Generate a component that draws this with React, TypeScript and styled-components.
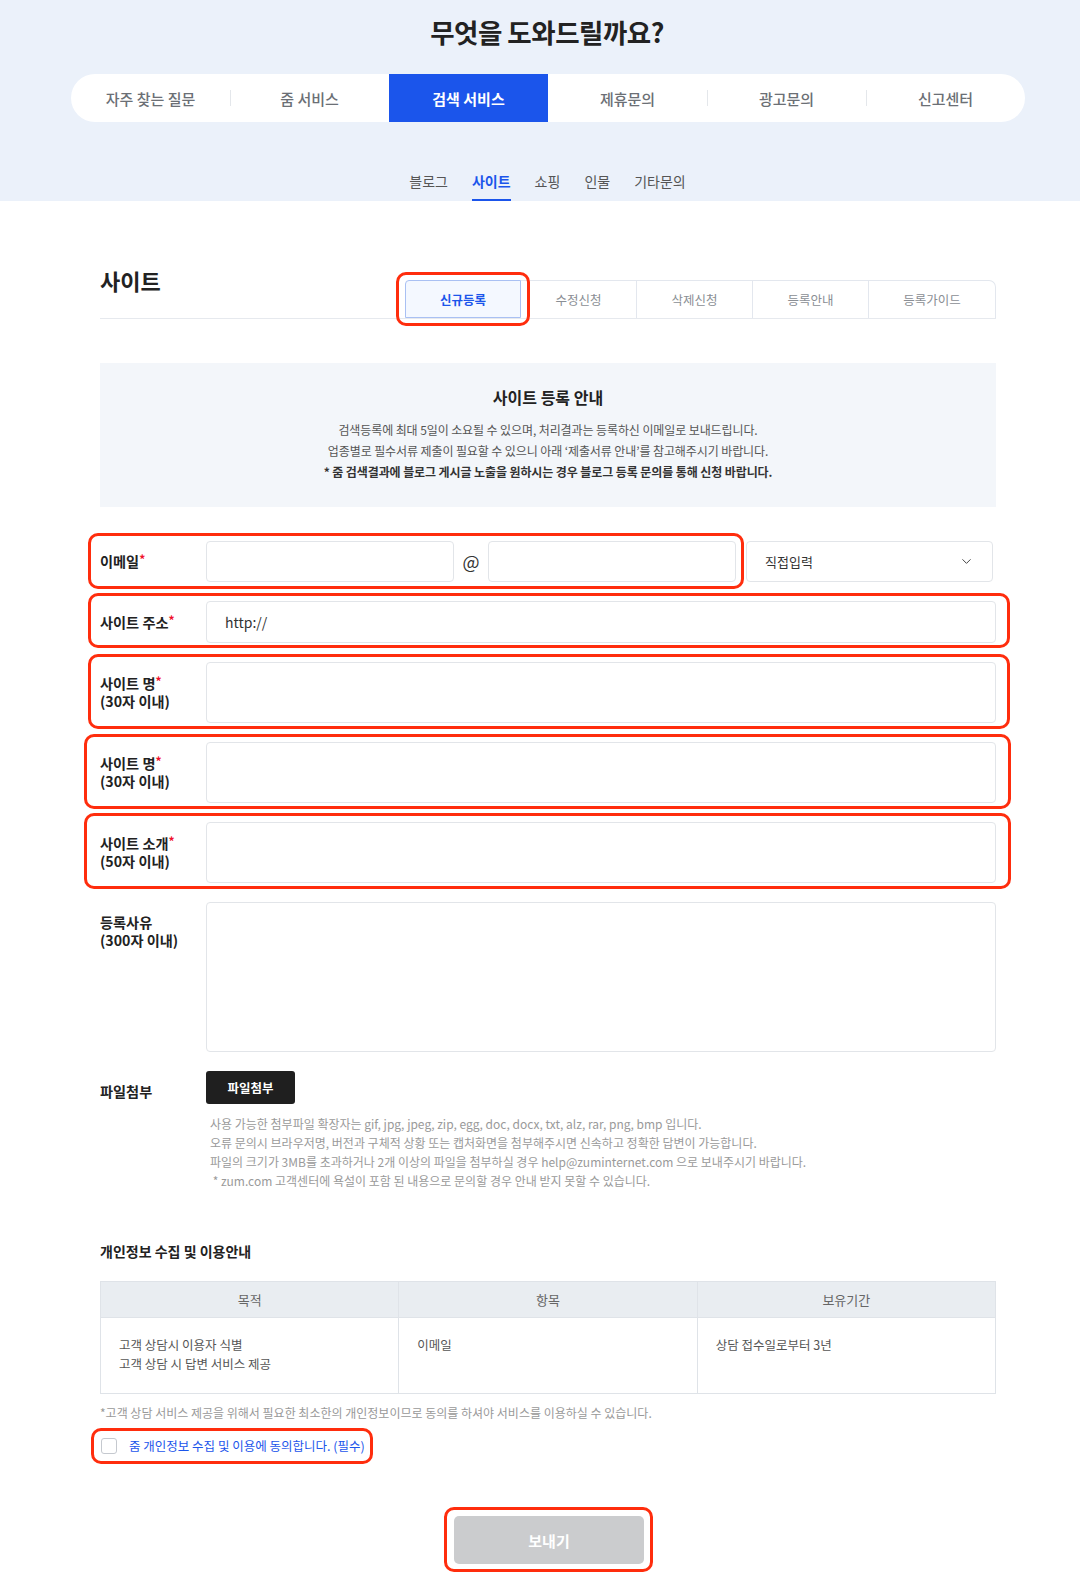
import styled, { createGlobalStyle, css } from "styled-components";
import { ChevronDown } from "lucide-react";

const GlobalStyle = createGlobalStyle`
  * { box-sizing: border-box; }
  body {
    margin: 0;
    background: #fff;
    color: #222;
    font-family: "Noto Sans CJK KR", "Noto Sans", sans-serif;
  }
`;

type MarkProps = { $mark?: string };

// red hand-drawn highlight from the screenshot
const markStyle = ({ $mark }: MarkProps) =>
  $mark &&
  css`
    position: relative;
    &::after {
      content: "";
      position: absolute;
      inset: ${$mark};
      border: 3px solid #ff2d0d;
      border-radius: 10px;
      pointer-events: none;
    }
  `;

const Hero = styled.header`
  background: #ebf1fa;
  padding-top: 15px;
`;

const Title = styled.h1`
  margin: 0;
  padding-left: 14px;
  text-align: center;
  font-size: 26.5px;
  line-height: 33px;
  font-weight: 700;
  color: #222;
  letter-spacing: -0.5px;
`;

const MainNav = styled.nav`
  display: flex;
  width: 954px;
  height: 48px;
  margin: 26px 0 0 71px;
  background: #fff;
  border-radius: 24px;
  overflow: hidden;
`;

const NavItem = styled.a<{ $active?: boolean; $sep?: boolean }>`
  position: relative;
  flex: 1;
  display: flex;
  align-items: center;
  justify-content: center;
  font-size: 15px;
  font-weight: 500;
  color: #6b6f75;
  ${(p) =>
    p.$active &&
    css`
      background: #1b55eb;
      color: #fff;
      font-weight: 700;
    `}
  ${(p) =>
    p.$sep &&
    css`
      &::before {
        content: "";
        position: absolute;
        left: 0;
        top: 16px;
        width: 1px;
        height: 16px;
        background: #e4e7eb;
      }
    `}
`;

const SubNav = styled.div`
  display: flex;
  justify-content: center;
  gap: 24px;
  margin-top: 49px;
  padding-left: 15px;
`;

const SubItem = styled.a<{ $active?: boolean }>`
  font-size: 14px;
  line-height: 20px;
  padding-bottom: 8px;
  border-bottom: 2px solid ${(p) => (p.$active ? "#1b55eb" : "transparent")};
  color: ${(p) => (p.$active ? "#1b55eb" : "#555")};
  font-weight: ${(p) => (p.$active ? 700 : 400)};
`;

const Content = styled.main`
  width: 896px;
  margin-left: 100px;
  padding: 66px 0 41px;
`;

const SectionHead = styled.div`
  display: flex;
  justify-content: space-between;
  align-items: flex-end;
  border-bottom: 1px solid #e6e9ee;
`;

const SectionTitle = styled.h2`
  align-self: flex-start;
  margin: 0;
  font-size: 22px;
  line-height: 27px;
  font-weight: 700;
  color: #222;
`;

const Tabs = styled.div`
  display: flex;
  margin-top: 13px;
`;

const Tab = styled.a<{ $active?: boolean; $last?: boolean } & MarkProps>`
  width: 116px;
  height: 38px;
  display: flex;
  align-items: center;
  justify-content: center;
  font-size: 12.5px;
  color: #8a8e94;
  border: 1px solid #e3e7ee;
  border-bottom: none;
  border-left: none;
  ${(p) =>
    p.$last &&
    css`
      border-top-right-radius: 7px;
      width: 127px;
    `}
  ${(p) =>
    p.$active &&
    css`
      background: #f4f8ff;
      border: 1px solid #a9c0f3;
      color: #1b55eb;
      font-weight: 600;
      border-top-left-radius: 4px;
    `}
  ${markStyle}
`;

const InfoBox = styled.section`
  margin-top: 44px;
  padding: 22px 0 24px;
  background: #f3f6fa;
  text-align: center;
`;

const InfoTitle = styled.h3`
  margin: 0 0 10px;
  font-size: 16px;
  line-height: 24px;
  font-weight: 700;
  color: #222;
`;

const InfoLine = styled.p<{ $strong?: boolean }>`
  margin: 0;
  font-size: 12px;
  line-height: 21.2px;
  letter-spacing: -0.1px;
  color: ${(p) => (p.$strong ? "#333" : "#555")};
  font-weight: ${(p) => (p.$strong ? 700 : 400)};
`;

const Form = styled.form`
  display: flex;
  flex-direction: column;
  gap: 19px;
  margin-top: 34px;
`;

const Row = styled.div<{ $top?: boolean } & MarkProps>`
  display: flex;
  align-items: ${(p) => (p.$top ? "flex-start" : "center")};
  ${markStyle}
`;

const EmailGroup = styled.div<MarkProps>`
  display: flex;
  align-items: center;
  ${markStyle}
`;

const Label = styled.label<{ $top?: boolean }>`
  flex: 0 0 106px;
  font-size: 14.2px;
  line-height: 18px;
  font-weight: 700;
  color: #222;
  padding-top: ${(p) => (p.$top ? "11px" : "0")};
`;

const Req = styled.span`
  color: #f0102a;
  font-size: 12px;
  vertical-align: top;
  line-height: 14px;
`;

const Field = styled.input<{ $h: number; $w?: number }>`
  flex: ${(p) => (p.$w ? `0 0 ${p.$w}px` : "1")};
  width: ${(p) => (p.$w ? `${p.$w}px` : "auto")};
  height: ${(p) => p.$h}px;
  padding: 0 18px;
  border: 1px solid #e2e5e9;
  border-radius: 4px;
  font-family: inherit;
  font-size: 14px;
  color: #333;
  background: #fff;
  outline: none;
`;

const Area = styled.textarea`
  flex: 1;
  height: 150px;
  border: 1px solid #e2e5e9;
  border-radius: 4px;
  resize: none;
  outline: none;
  font-family: inherit;
`;

const At = styled.span`
  width: 34px;
  text-align: center;
  font-size: 18px;
  color: #333;
`;

const Select = styled.div`
  display: flex;
  align-items: center;
  justify-content: space-between;
  width: 247px;
  height: 41px;
  margin-left: 10px;
  padding: 0 18px;
  border: 1px solid #e2e5e9;
  border-radius: 4px;
  font-size: 13px;
  color: #333;
`;

const FileCol = styled.div`
  display: flex;
  flex-direction: column;
  align-items: flex-start;
`;

const DarkButton = styled.button`
  width: 89px;
  height: 33px;
  border: none;
  border-radius: 3px;
  background: #1f1f1f;
  color: #fff;
  font-family: inherit;
  font-size: 12.5px;
  font-weight: 700;
`;

const Help = styled.p`
  margin: 10px 0 0;
  padding-left: 4px;
  font-size: 12px;
  line-height: 19.2px;
  color: #9a9a9a;
`;

const PrivacyTitle = styled.h4`
  margin: 51px 0 0;
  font-size: 14px;
  line-height: 20px;
  font-weight: 700;
  color: #222;
`;

const Table = styled.table`
  width: 100%;
  margin-top: 20px;
  border-collapse: collapse;
  table-layout: fixed;
  th {
    height: 36px;
    background: #e9edf1;
    border: 1px solid #dfe3e8;
    font-size: 13px;
    font-weight: 400;
    color: #666;
  }
  td {
    height: 76px;
    padding: 17px 18px;
    vertical-align: top;
    border: 1px solid #dfe3e8;
    font-size: 12.5px;
    line-height: 19px;
    color: #555;
  }
`;

const Note = styled.p`
  margin: 11px 0 0;
  font-size: 12px;
  line-height: 16px;
  color: #999;
`;

const CheckRow = styled.label<MarkProps>`
  display: inline-flex;
  align-items: center;
  gap: 12px;
  margin-top: 16px;
  margin-left: 1px;
  font-size: 12.5px;
  line-height: 18px;
  color: #1b55eb;
  ${markStyle}
`;

const Box = styled.span`
  width: 16px;
  height: 16px;
  border: 1px solid #c5c9cf;
  border-radius: 3px;
  background: #fff;
`;

const Actions = styled.div`
  display: flex;
  justify-content: center;
  margin-top: 57px;
  padding-left: 2px;
`;

const Submit = styled.button<MarkProps>`
  width: 190px;
  height: 48px;
  border: none;
  border-radius: 5px;
  background: #cbccce;
  color: #fff;
  font-family: inherit;
  font-size: 15px;
  font-weight: 700;
  ${markStyle}
`;

const mainMenu = ["자주 찾는 질문", "줌 서비스", "검색 서비스", "제휴문의", "광고문의", "신고센터"];
const subMenu = ["블로그", "사이트", "쇼핑", "인물", "기타문의"];
const tabs = ["신규등록", "수정신청", "삭제신청", "등록안내", "등록가이드"];

const App = () => {
  return (
    <>
      <GlobalStyle />
      <Hero>
        <Title>무엇을 도와드릴까요?</Title>
        <MainNav>
          {mainMenu.map((m, i) => (
            <NavItem key={m} $active={i === 2} $sep={i === 1 || i === 4 || i === 5}>
              {m}
            </NavItem>
          ))}
        </MainNav>
        <SubNav>
          {subMenu.map((s) => (
            <SubItem key={s} $active={s === "사이트"}>
              {s}
            </SubItem>
          ))}
        </SubNav>
      </Hero>

      <Content>
        <SectionHead>
          <SectionTitle>사이트</SectionTitle>
          <Tabs>
            {tabs.map((t, i) => (
              <Tab
                key={t}
                $active={i === 0}
                $last={i === tabs.length - 1}
                $mark={i === 0 ? "-9px -10px -9px -10px" : undefined}
              >
                {t}
              </Tab>
            ))}
          </Tabs>
        </SectionHead>

        <InfoBox>
          <InfoTitle>사이트 등록 안내</InfoTitle>
          <InfoLine>검색등록에 최대 5일이 소요될 수 있으며, 처리결과는 등록하신 이메일로 보내드립니다.</InfoLine>
          <InfoLine>업종별로 필수서류 제출이 필요할 수 있으니 아래 ‘제출서류 안내’를 참고해주시기 바랍니다.</InfoLine>
          <InfoLine $strong>* 줌 검색결과에 블로그 게시글 노출을 원하시는 경우 블로그 등록 문의를 통해 신청 바랍니다.</InfoLine>
        </InfoBox>

        <Form>
          <Row>
            <EmailGroup $mark="-8px -8px -7px -12px">
              <Label>
                이메일<Req>*</Req>
              </Label>
              <Field $h={41} $w={248} />
              <At>@</At>
              <Field $h={41} $w={248} />
            </EmailGroup>
            <Select>
              직접입력
              <ChevronDown size={15} strokeWidth={1.6} color="#444" />
            </Select>
          </Row>

          <Row $mark="-8px -14px -5px -12px">
            <Label>
              사이트 주소<Req>*</Req>
            </Label>
            <Field $h={42} defaultValue="http://" />
          </Row>

          <Row $mark="-8px -14px -6px -12px">
            <Label>
              사이트 명<Req>*</Req>
              <br />
              (30자 이내)
            </Label>
            <Field $h={61} />
          </Row>

          <Row $mark="-8px -15px -6px -16px">
            <Label>
              사이트 명<Req>*</Req>
              <br />
              (30자 이내)
            </Label>
            <Field $h={61} />
          </Row>

          <Row $mark="-9px -15px -6px -16px">
            <Label>
              사이트 소개<Req>*</Req>
              <br />
              (50자 이내)
            </Label>
            <Field $h={61} />
          </Row>

          <Row $top>
            <Label $top>
              등록사유
              <br />
              (300자 이내)
            </Label>
            <Area />
          </Row>

          <Row $top>
            <Label $top>파일첨부</Label>
            <FileCol>
              <DarkButton type="button">파일첨부</DarkButton>
              <Help>
                사용 가능한 첨부파일 확장자는 gif, jpg, jpeg, zip, egg, doc, docx, txt, alz, rar, png, bmp 입니다.
                <br />
                오류 문의시 브라우저명, 버전과 구체적 상황 또는 캡처화면을 첨부해주시면 신속하고 정확한 답변이 가능합니다.
                <br />
                파일의 크기가 3MB를 초과하거나 2개 이상의 파일을 첨부하실 경우 help@zuminternet.com 으로 보내주시기 바랍니다.
                <br />
                &nbsp;* zum.com 고객센터에 욕설이 포함 된 내용으로 문의할 경우 안내 받지 못할 수 있습니다.
              </Help>
            </FileCol>
          </Row>
        </Form>

        <PrivacyTitle>개인정보 수집 및 이용안내</PrivacyTitle>
        <Table>
          <thead>
            <tr>
              <th>목적</th>
              <th>항목</th>
              <th>보유기간</th>
            </tr>
          </thead>
          <tbody>
            <tr>
              <td>
                고객 상담시 이용자 식별
                <br />
                고객 상담 시 답변 서비스 제공
              </td>
              <td>이메일</td>
              <td>상담 접수일로부터 3년</td>
            </tr>
          </tbody>
        </Table>
        <Note>*고객 상담 서비스 제공을 위해서 필요한 최소한의 개인정보이므로 동의를 하셔야 서비스를 이용하실 수 있습니다.</Note>
        <CheckRow $mark="-9px -8px -9px -10px">
          <Box />줌 개인정보 수집 및 이용에 동의합니다. (필수)
        </CheckRow>

        <Actions>
          <Submit type="button" $mark="-9px -9px -8px -10px">
            보내기
          </Submit>
        </Actions>
      </Content>
    </>
  );
};

export default App;
